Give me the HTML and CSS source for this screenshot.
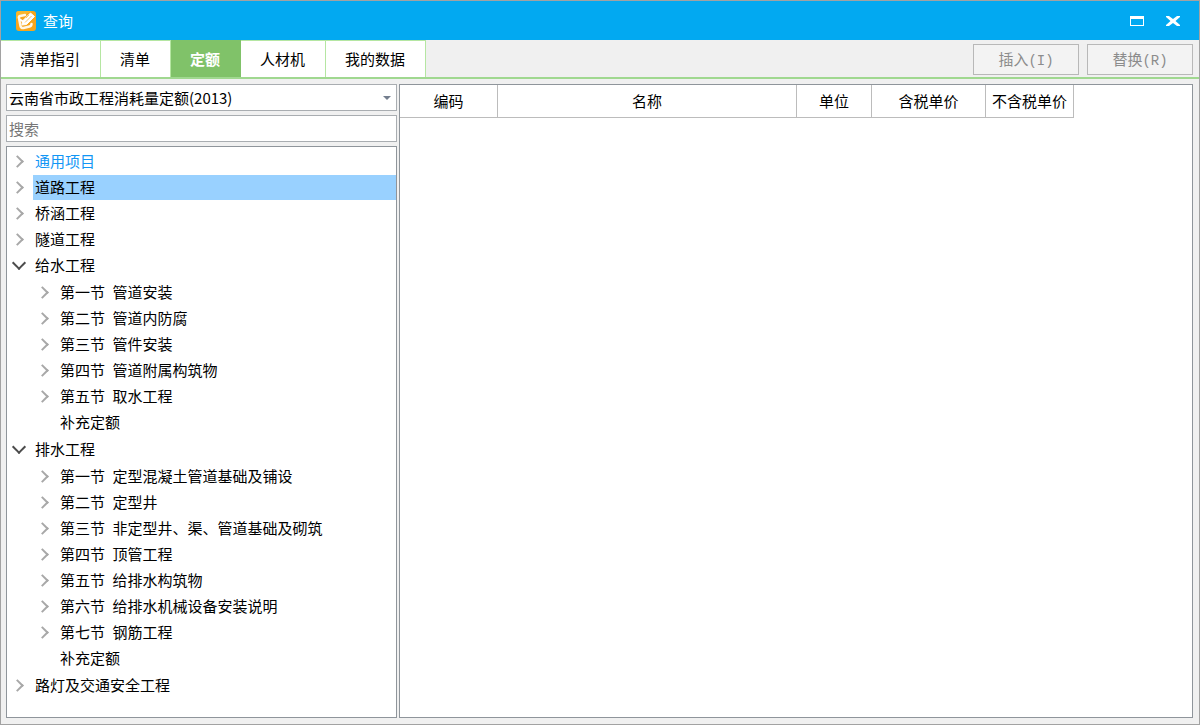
FILE: index.html
```html
<!DOCTYPE html>
<html lang="zh-CN">
<head>
<meta charset="utf-8">
<title>查询</title>
<link rel="stylesheet" href="styles.css">
</head>
<body>
<div class="window">
  <header class="titlebar">
    <svg class="logo" viewBox="0 0 20 20" aria-hidden="true">
      <rect width="20" height="20" rx="3" fill="#f7a51c"/>
      <path d="M0 8V3Q0 0 3 0h13z" fill="#f8b62c"/>
      <path d="M9 4L4 5Q2.500 5.500 3 7l1.500 8q.5 2.500 3 2l6-1.500q2-.5 2-2.500" fill="none" stroke="#fff7e6" stroke-width="2.500" stroke-linecap="round" stroke-linejoin="round"/>
      <path d="M14.500 2L18.500 5.500L10.500 13.500L6 14L6.500 10z" fill="#fff" stroke="#fff" stroke-width="1" stroke-linejoin="round"/>
      <path d="M4 8.500L7 10.500" stroke="#fff" stroke-width="2"/>
      <path d="M9 11.500L15.500 5M13 4L10 7" stroke="#f9c56b" stroke-width="1"/>
    </svg>
    <h1 class="title">查询</h1>
    <button class="window-button" type="button" aria-label="最大化">
      <svg width="16" height="14" viewBox="0 0 16 14"><path d="M1 2h14v10H1zM2 5v6h12V5z" fill="#fff" fill-rule="evenodd"/></svg>
    </button>
    <button class="window-button" type="button" aria-label="关闭">
      <svg width="16" height="14" viewBox="0 0 16 14"><path d="M1 2h3l4 3 4-3h3v1l-4.500 4 4.500 4v1h-3L8 9l-4 3H1v-1l4.500-4L1 3z" fill="#fff"/></svg>
    </button>
  </header>

  <div class="toolbar">
    <nav class="tabs">
      <button class="tab" type="button">清单指引</button>
      <button class="tab" type="button">清单</button>
      <button class="tab tab-active" type="button">定额</button>
      <button class="tab" type="button">人材机</button>
      <button class="tab" type="button">我的数据</button>
    </nav>
    <div class="actions">
      <button class="action" type="button" disabled>插入<span class="key">(I)</span></button>
      <button class="action" type="button" disabled>替换<span class="key">(R)</span></button>
    </div>
  </div>

  <main class="content">
    <aside class="sidebar">
      <div class="library">
        <select class="field library-select" aria-label="定额库">
          <option>云南省市政工程消耗量定额(2013)</option>
        </select>
        <span class="library-arrow"></span>
      </div>
      <input class="field search" type="text" placeholder="搜索" aria-label="搜索">
      <ul class="tree">
        <li><div class="row"><button class="toggle" type="button" aria-label="展开"></button><span class="label label-link">通用项目</span></div></li>
        <li><div class="row"><button class="toggle" type="button" aria-label="展开"></button><span class="label label-selected">道路工程</span></div></li>
        <li><div class="row"><button class="toggle" type="button" aria-label="展开"></button><span class="label">桥涵工程</span></div></li>
        <li><div class="row"><button class="toggle" type="button" aria-label="展开"></button><span class="label">隧道工程</span></div></li>
        <li>
          <div class="row"><button class="toggle toggle-open" type="button" aria-label="折叠"></button><span class="label">给水工程</span></div>
          <ul class="branch">
            <li class="row"><button class="toggle" type="button" aria-label="展开"></button><span class="label"><span class="section">第一节</span> <span>管道安装</span></span></li>
            <li class="row"><button class="toggle" type="button" aria-label="展开"></button><span class="label"><span class="section">第二节</span> <span>管道内防腐</span></span></li>
            <li class="row"><button class="toggle" type="button" aria-label="展开"></button><span class="label"><span class="section">第三节</span> <span>管件安装</span></span></li>
            <li class="row"><button class="toggle" type="button" aria-label="展开"></button><span class="label"><span class="section">第四节</span> <span>管道附属构筑物</span></span></li>
            <li class="row"><button class="toggle" type="button" aria-label="展开"></button><span class="label"><span class="section">第五节</span> <span>取水工程</span></span></li>
            <li class="row row-leaf"><span class="label">补充定额</span></li>
          </ul>
        </li>
        <li>
          <div class="row"><button class="toggle toggle-open" type="button" aria-label="折叠"></button><span class="label">排水工程</span></div>
          <ul class="branch">
            <li class="row"><button class="toggle" type="button" aria-label="展开"></button><span class="label"><span class="section">第一节</span> <span>定型混凝土管道基础及铺设</span></span></li>
            <li class="row"><button class="toggle" type="button" aria-label="展开"></button><span class="label"><span class="section">第二节</span> <span>定型井</span></span></li>
            <li class="row"><button class="toggle" type="button" aria-label="展开"></button><span class="label"><span class="section">第三节</span> <span>非定型井、渠、管道基础及砌筑</span></span></li>
            <li class="row"><button class="toggle" type="button" aria-label="展开"></button><span class="label"><span class="section">第四节</span> <span>顶管工程</span></span></li>
            <li class="row"><button class="toggle" type="button" aria-label="展开"></button><span class="label"><span class="section">第五节</span> <span>给排水构筑物</span></span></li>
            <li class="row"><button class="toggle" type="button" aria-label="展开"></button><span class="label"><span class="section">第六节</span> <span>给排水机械设备安装说明</span></span></li>
            <li class="row"><button class="toggle" type="button" aria-label="展开"></button><span class="label"><span class="section">第七节</span> <span>钢筋工程</span></span></li>
            <li class="row row-leaf"><span class="label">补充定额</span></li>
          </ul>
        </li>
        <li><div class="row"><button class="toggle" type="button" aria-label="展开"></button><span class="label">路灯及交通安全工程</span></div></li>
      </ul>
    </aside>

    <section class="results">
      <table class="grid">
        <colgroup><col class="col-code"><col class="col-name"><col class="col-unit"><col class="col-taxed"><col class="col-untaxed"></colgroup>
        <thead>
          <tr><th>编码</th><th>名称</th><th>单位</th><th>含税单价</th><th>不含税单价</th></tr>
        </thead>
      </table>
    </section>
  </main>
</div>
</body>
</html>
```
FILE: styles.css
```css
* {
  box-sizing: border-box;
}

body,
button,
input,
select {
  font-family: "Noto Sans CJK SC", sans-serif;
  font-size: 15px;
  line-height: 20px;
}

body {
  margin: 0;
  color: #000;
}

button {
  margin: 0;
  padding: 0;
  border: 0;
  background: none;
  color: inherit;
}

ul {
  margin: 0;
  padding: 0;
  list-style: none;
}

.window {
  display: flex;
  flex-direction: column;
  min-height: 100vh;
  border: 1px solid #a2a2a2;
  background: #f0f0f0;
}

.titlebar {
  display: flex;
  align-items: center;
  height: 39px;
  padding: 0 18px 0 15px;
  background: #02a9f1;
  color: #fff;
}

.logo {
  width: 20px;
  height: 20px;
  margin-right: 7px;
}

.title {
  flex: 1;
  margin: 0;
  font-size: 15px;
  font-weight: 400;
}

.window-button {
  display: flex;
  margin-left: 20px;
}

.toolbar {
  display: flex;
  justify-content: space-between;
  border-bottom: 2px solid #a0d890;
}

.tabs {
  display: flex;
}

.tab {
  height: 37px;
  padding: 0 20px 0 19px;
  border-top: 1px solid #b5e6a2;
  border-right: 1px solid #b5e6a2;
  background: #fff;
}

.tab-active {
  border-color: #80c269;
  background: #80c269;
  color: #fff;
  font-weight: 700;
}

.actions {
  display: flex;
  gap: 8px;
  padding: 4px 6px 2px 0;
}

.action {
  width: 106px;
  border: 1px solid #b8b8b8;
  background: #f3f3f3;
  color: #8c8c8c;
}

.key {
  font-family: "Liberation Mono", monospace;
  font-size: 14px;
}

.content {
  display: flex;
  flex: 1;
  gap: 2px;
  padding: 5px 6px 6px 5px;
}

.sidebar {
  display: flex;
  flex-direction: column;
  flex: 0 0 391px;
  gap: 4px;
}

.library {
  display: grid;
  align-items: center;
}

.field {
  grid-area: 1 / 1;
  width: 100%;
  height: 27px;
  padding: 0 2px;
  border: 1px solid #a9adb1;
  border-radius: 0;
  outline: 0;
  background: #fff;
  color: #000;
}

.library-select {
  appearance: none;
}

.library-arrow {
  grid-area: 1 / 1;
  justify-self: end;
  margin-right: 6px;
  border: 4px solid transparent;
  border-top-color: #747e8e;
  border-bottom: 0;
  pointer-events: none;
}

.search::placeholder {
  color: #777;
  opacity: 1;
}

.tree {
  flex: 1;
  border: 1px solid #8f959b;
  background: #fff;
  padding-top: 1px;
}

.row {
  display: flex;
  align-items: center;
  height: 26px;
}

.branch {
  padding: 1px 0 1px 25px;
}

.toggle {
  display: flex;
  align-items: center;
  justify-content: center;
  width: 26px;
  height: 26px;
}

.toggle::before {
  content: "";
  width: 7px;
  height: 7px;
  margin-right: 5px;
  border-top: 2px solid #a8a8a8;
  border-right: 2px solid #a8a8a8;
  transform: rotate(45deg);
}

.toggle-open::before {
  width: 8px;
  height: 8px;
  margin: 0 2px 5px 0;
  border-color: #4c4c4c;
  transform: rotate(135deg);
}

.label {
  flex: 1;
  height: 25px;
  padding-left: 2px;
  line-height: 24px;
  white-space: nowrap;
}

.section {
  margin-right: 4px;
}

.label-link {
  color: #1296f5;
}

.label-selected {
  background: #99d1ff;
}

.row-leaf {
  padding-left: 26px;
}

.results {
  flex: 1;
  border: 1px solid #8f959b;
  background: #fff;
}

.grid {
  table-layout: fixed;
  width: 674px;
  border-spacing: 0;
}

.grid th {
  height: 33px;
  padding: 0;
  border-right: 1px solid #bcbcbc;
  border-bottom: 1px solid #bcbcbc;
  font-weight: 400;
  white-space: nowrap;
}

.col-code {
  width: 98px;
}

.col-name {
  width: 299px;
}

.col-unit {
  width: 75px;
}

.col-taxed {
  width: 114px;
}

.col-untaxed {
  width: 88px;
}
```
